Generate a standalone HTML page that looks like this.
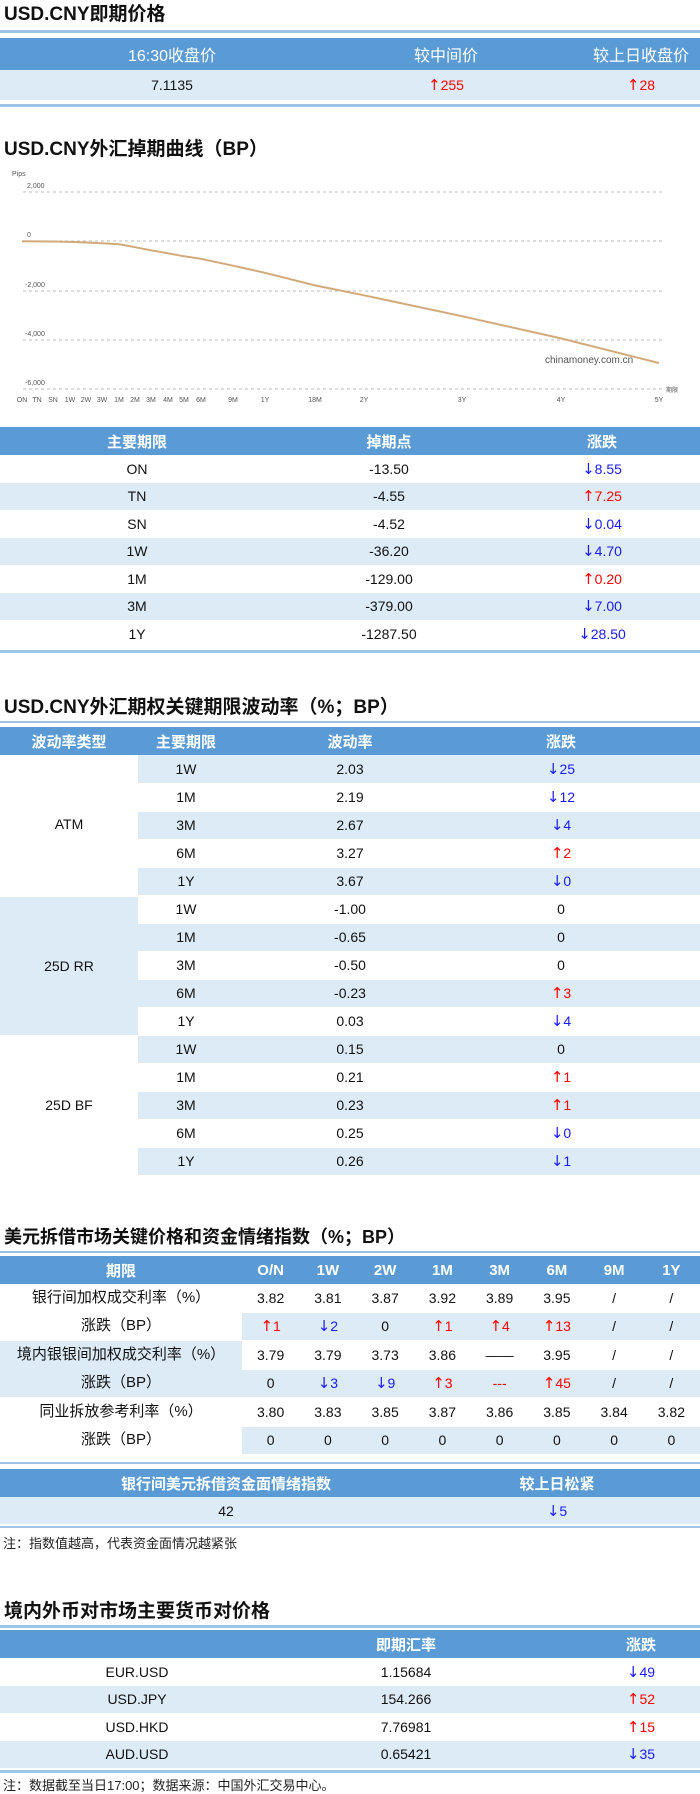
<!DOCTYPE html>
<html><head><meta charset="utf-8"><style>
*{margin:0;padding:0;box-sizing:border-box}
body{width:700px;height:1793px;position:relative;background:#fff;font-family:"Liberation Sans","Noto Sans CJK SC",sans-serif;color:#111;overflow:hidden}
.h{position:absolute;left:4px;font-weight:bold;font-size:19px;line-height:24px;color:#111}
.ln{position:absolute;left:0;width:700px;height:3px;background:#9dc3e6}
table{position:absolute;left:0;width:700px;border-collapse:collapse;table-layout:fixed;text-align:center;font-size:14px}
th{background:#5b9bd5;color:#fff;font-weight:bold;font-size:15px;height:28px;padding:0}
td{padding:0;height:27.5px;border-bottom:1px solid #fff}
.v td{height:28px}
.l{background:#ddebf7}
.r{color:#f00}.b{color:#1a1aff}
i{font-style:normal;font-family:"DejaVu Sans",sans-serif;font-size:15px}
.note{position:absolute;left:3px;font-size:13px;color:#222}
svg text{font-family:"Liberation Sans",sans-serif}
</style></head><body>

<div class="h" style="top:3px">USD.CNY即期价格</div>
<div class="ln" style="top:30px"></div>
<table style="top:38px">
<colgroup><col style="width:344px"><col style="width:204px"><col style="width:152px"></colgroup>
<tr><th style="font-weight:normal;font-size:16px;height:32px">16:30收盘价</th><th style="font-weight:normal;font-size:16px">较中间价</th><th style="font-weight:normal;font-size:16px;padding-left:34px">较上日收盘价</th></tr>
<tr class="l"><td style="height:30px">7.1135</td><td class="r"><i>↑</i>255</td><td class="r" style="padding-left:34px"><i>↑</i>28</td></tr>
</table>
<div class="ln" style="top:104px"></div>

<div class="h" style="top:138px">USD.CNY外汇掉期曲线（BP）</div>
<svg style="position:absolute;left:0;top:160px" width="700" height="250">
<text x="12" y="16" font-size="7" fill="#555">Pips</text>
<g stroke="#bbb" stroke-dasharray="3,3" stroke-width="1">
<line x1="23" y1="32" x2="664" y2="32"/><line x1="23" y1="81" x2="664" y2="81"/><line x1="23" y1="131" x2="664" y2="131"/><line x1="23" y1="180" x2="664" y2="180"/><line x1="23" y1="229" x2="664" y2="229"/></g>
<g font-size="7" fill="#555"><text x="27" y="28">2,000</text><text x="27" y="77">0</text><text x="25" y="127">-2,000</text><text x="25" y="176">-4,000</text><text x="25" y="225">-6,000</text></g>
<polyline fill="none" stroke="#d2a97a" stroke-width="2" points="22,81.3 37,81.4 53,81.5 70,81.9 86,82.5 102,83.2 119,84.2 135,87.2 151,90.3 168,93.3 184,96.3 201,98.8 233,105.7 265,112.8 315,125.4 364,135.3 462,156.2 561,178.4 659,203"/>
<text x="545" y="203" font-size="10" fill="#555">chinamoney.com.cn</text>
<text x="666" y="232" font-size="6" fill="#555">期限</text>
<g font-size="7" fill="#555" text-anchor="middle"><text x="22" y="242">ON</text><text x="37" y="242">TN</text><text x="53" y="242">SN</text><text x="70" y="242">1W</text><text x="86" y="242">2W</text><text x="102" y="242">3W</text><text x="119" y="242">1M</text><text x="135" y="242">2M</text><text x="151" y="242">3M</text><text x="168" y="242">4M</text><text x="184" y="242">5M</text><text x="201" y="242">6M</text><text x="233" y="242">9M</text><text x="265" y="242">1Y</text><text x="315" y="242">18M</text><text x="364" y="242">2Y</text><text x="462" y="242">3Y</text><text x="561" y="242">4Y</text><text x="659" y="242">5Y</text></g>
</svg>

<table style="top:427px">
<colgroup><col style="width:274px"><col style="width:230px"><col style="width:196px"></colgroup>
<tr><th>主要期限</th><th>掉期点</th><th>涨跌</th></tr>
<tr><td>ON</td><td>-13.50</td><td class="b"><i>↓</i>8.55</td></tr>
<tr class="l"><td>TN</td><td>-4.55</td><td class="r"><i>↑</i>7.25</td></tr>
<tr><td>SN</td><td>-4.52</td><td class="b"><i>↓</i>0.04</td></tr>
<tr class="l"><td>1W</td><td>-36.20</td><td class="b"><i>↓</i>4.70</td></tr>
<tr><td>1M</td><td>-129.00</td><td class="r"><i>↑</i>0.20</td></tr>
<tr class="l"><td>3M</td><td>-379.00</td><td class="b"><i>↓</i>7.00</td></tr>
<tr><td>1Y</td><td>-1287.50</td><td class="b"><i>↓</i>28.50</td></tr>
</table>
<div class="ln" style="top:650px"></div>

<div class="h" style="top:696px">USD.CNY外汇期权关键期限波动率（%；BP）</div>
<div class="ln" style="top:721px;height:2px"></div>
<table class="v" style="top:727px">
<colgroup><col style="width:138px"><col style="width:96px"><col style="width:232px"><col style="width:234px"></colgroup>
<tr><th>波动率类型</th><th>主要期限</th><th>波动率</th><th style="padding-right:44px">涨跌</th></tr>
<tr class="l"><td rowspan="5" style="background:#fff">ATM</td><td>1W</td><td>2.03</td><td class="b" style="padding-right:44px"><i>↓</i>25</td></tr>
<tr><td>1M</td><td>2.19</td><td class="b" style="padding-right:44px"><i>↓</i>12</td></tr>
<tr class="l"><td>3M</td><td>2.67</td><td class="b" style="padding-right:44px"><i>↓</i>4</td></tr>
<tr><td>6M</td><td>3.27</td><td class="r" style="padding-right:44px"><i>↑</i>2</td></tr>
<tr class="l"><td>1Y</td><td>3.67</td><td class="b" style="padding-right:44px"><i>↓</i>0</td></tr>
<tr><td rowspan="5" class="l" style="border-top:3px solid #fff">25D RR</td><td>1W</td><td>-1.00</td><td style="padding-right:44px">0</td></tr>
<tr class="l"><td>1M</td><td>-0.65</td><td style="padding-right:44px">0</td></tr>
<tr><td>3M</td><td>-0.50</td><td style="padding-right:44px">0</td></tr>
<tr class="l"><td>6M</td><td>-0.23</td><td class="r" style="padding-right:44px"><i>↑</i>3</td></tr>
<tr><td>1Y</td><td>0.03</td><td class="b" style="padding-right:44px"><i>↓</i>4</td></tr>
<tr class="l"><td rowspan="5" style="background:#fff">25D BF</td><td>1W</td><td>0.15</td><td style="padding-right:44px">0</td></tr>
<tr><td>1M</td><td>0.21</td><td class="r" style="padding-right:44px"><i>↑</i>1</td></tr>
<tr class="l"><td>3M</td><td>0.23</td><td class="r" style="padding-right:44px"><i>↑</i>1</td></tr>
<tr><td>6M</td><td>0.25</td><td class="b" style="padding-right:44px"><i>↓</i>0</td></tr>
<tr class="l"><td>1Y</td><td>0.26</td><td class="b" style="padding-right:44px"><i>↓</i>1</td></tr>
</table>

<div class="h" style="top:1225px;font-size:18px">美元拆借市场关键价格和资金情绪指数（%；BP）</div>
<div class="ln" style="top:1251px;height:2px"></div>
<table style="top:1256px;font-size:14px">
<colgroup><col style="width:242px"><col><col><col><col><col><col><col><col></colgroup>
<tr><th>期限</th><th>O/N</th><th>1W</th><th>2W</th><th>1M</th><th>3M</th><th>6M</th><th>9M</th><th>1Y</th></tr>
<tr><td rowspan="2" style="font-size:15px;line-height:28px">银行间加权成交利率（%）<br>涨跌（BP）</td><td>3.82</td><td>3.81</td><td>3.87</td><td>3.92</td><td>3.89</td><td>3.95</td><td>/</td><td>/</td></tr>
<tr class="l"><td class="r"><i>↑</i>1</td><td class="b"><i>↓</i>2</td><td>0</td><td class="r"><i>↑</i>1</td><td class="r"><i>↑</i>4</td><td class="r"><i>↑</i>13</td><td>/</td><td>/</td></tr>
<tr><td rowspan="2" class="l" style="font-size:15px;line-height:28px">境内银银间加权成交利率（%）<br>涨跌（BP）</td><td>3.79</td><td>3.79</td><td>3.73</td><td>3.86</td><td>——</td><td>3.95</td><td>/</td><td>/</td></tr>
<tr class="l"><td>0</td><td class="b"><i>↓</i>3</td><td class="b"><i>↓</i>9</td><td class="r"><i>↑</i>3</td><td class="r">---</td><td class="r"><i>↑</i>45</td><td>/</td><td>/</td></tr>
<tr><td rowspan="2" style="font-size:15px;line-height:28px">同业拆放参考利率（%）<br>涨跌（BP）</td><td>3.80</td><td>3.83</td><td>3.85</td><td>3.87</td><td>3.86</td><td>3.85</td><td>3.84</td><td>3.82</td></tr>
<tr class="l"><td>0</td><td>0</td><td>0</td><td>0</td><td>0</td><td>0</td><td>0</td><td>0</td></tr>
</table>
<div class="ln" style="top:1462px;height:2px"></div>
<table style="top:1469px">
<colgroup><col style="width:452px"><col style="width:248px"></colgroup>
<tr><th style="height:26px">银行间美元拆借资金面情绪指数</th><th style="padding-right:38px">较上日松紧</th></tr>
<tr class="l"><td>42</td><td class="b" style="padding-right:38px"><i>↓</i>5</td></tr>
</table>
<div class="ln" style="top:1526px;height:2px"></div>
<div class="note" style="top:1533px">注：指数值越高，代表资金面情况越紧张</div>

<div class="h" style="top:1600px">境内外币对市场主要货币对价格</div>
<div class="ln" style="top:1625px"></div>
<table style="top:1630px">
<colgroup><col style="width:274px"><col style="width:264px"><col style="width:162px"></colgroup>
<tr><th></th><th>即期汇率</th><th style="padding-left:44px">涨跌</th></tr>
<tr><td>EUR.USD</td><td>1.15684</td><td class="b" style="padding-left:44px"><i>↓</i>49</td></tr>
<tr class="l"><td>USD.JPY</td><td>154.266</td><td class="r" style="padding-left:44px"><i>↑</i>52</td></tr>
<tr><td>USD.HKD</td><td>7.76981</td><td class="r" style="padding-left:44px"><i>↑</i>15</td></tr>
<tr class="l"><td>AUD.USD</td><td>0.65421</td><td class="b" style="padding-left:44px"><i>↓</i>35</td></tr>
</table>
<div class="ln" style="top:1770px"></div>
<div class="note" style="top:1775px">注：数据截至当日17:00；数据来源：中国外汇交易中心。</div>
</body></html>
